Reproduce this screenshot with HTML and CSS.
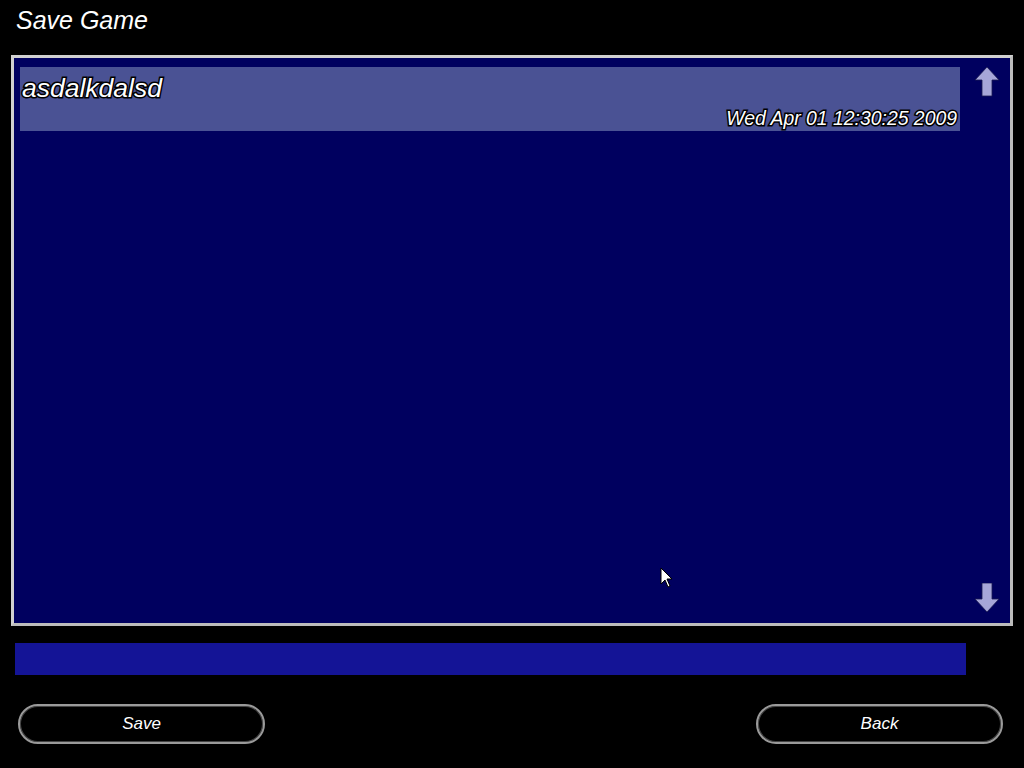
FILE: index.html
```html
<!DOCTYPE html>
<html lang="en">
<head>
    <meta charset="UTF-8">
    <title>Save Game</title>
    <link rel="stylesheet" href="styles.css">
</head>
<body>
    <div class="screen">
        <h1 class="title">Save Game</h1>

        <div class="panel">
            <div class="save-list">
                <div class="save-row selected">
                    <span class="save-name">asdalkdalsd</span>
                    <span class="save-date">Wed Apr 01 12:30:25 2009</span>
                </div>
            </div>
            <div class="scroll">
                <svg class="arrow" width="24" height="30" viewBox="0 0 24 30">
                    <polygon points="12,0 24,13 17,13 17,29 7,29 7,13 0,13" />
                </svg>
                <svg class="arrow" width="24" height="30" viewBox="0 0 24 30">
                    <polygon points="12,29 24,16 17,16 17,0 7,0 7,16 0,16" />
                </svg>
            </div>
        </div>

        <div class="name-input"></div>

        <div class="buttons">
            <div class="button">Save</div>
            <div class="button">Back</div>
        </div>

        <svg class="cursor" width="14" height="22" viewBox="0 0 14 22">
            <polygon points="1,1 1,17 5,13 8,20 10,19 7,12 12,12" />
        </svg>
    </div>
</body>
</html>
```

FILE: styles.css
```css
body {
    margin: 0;
    padding: 0;
    background-color: #000;
    font-family: "Liberation Sans", Arial, sans-serif;
    color: #fff;
}

.screen {
    position: relative;
    width: 1024px;
    height: 768px;
    overflow: hidden;
}

.title {
    margin: 0;
    padding: 5px 16px 0;
    height: 55px;
    font-size: 25px;
    font-weight: normal;
    font-style: italic;
    line-height: 30px;
    box-sizing: border-box;
}

.panel {
    display: flex;
    margin: 0 11px;
    height: 571px;
    box-sizing: border-box;
    border: 3px solid #bcbcbc;
    border-top-color: #d0d0d0;
    border-left-color: #d0d0d0;
    background-color: #00005f;
}

.save-list {
    width: 946px;
    padding: 9px 0 0 6px;
    box-sizing: border-box;
}

.save-row {
    display: flex;
    flex-direction: column;
    height: 64px;
    padding: 0 3px 0 2px;
    box-sizing: border-box;
    font-style: italic;
    -webkit-text-stroke: 3px #000;
    paint-order: stroke fill;
}

.save-row.selected {
    background-color: #4a5294;
}

.save-name {
    font-size: 26.5px;
    line-height: 30px;
    margin-top: 6px;
}

.save-date {
    align-self: flex-end;
    margin-top: auto;
    margin-bottom: 2px;
    font-size: 19.4px;
    line-height: 22px;
}

.scroll {
    flex: 1;
    display: flex;
    flex-direction: column;
    justify-content: space-between;
    align-items: center;
    padding: 9px 0 10px 4px;
}

.arrow polygon {
    fill: #a6a6d8;
    stroke: #1a1a50;
    stroke-width: 0.8;
}

.name-input {
    margin: 17px 0 0 15px;
    width: 951px;
    height: 32px;
    background-color: #141496;
}

.buttons {
    display: flex;
    justify-content: space-between;
    margin-top: 29px;
    padding: 0 21px 0 18px;
}

.button {
    width: 247px;
    height: 40px;
    box-sizing: border-box;
    border: 2px solid #9a9a9a;
    border-radius: 20px;
    box-shadow: inset 0 0 0 1px #444;
    text-align: center;
    font-size: 17px;
    font-style: italic;
    line-height: 36px;
}

.cursor {
    position: absolute;
    left: 660px;
    top: 567px;
}

.cursor polygon {
    fill: #fff;
    stroke: #000;
    stroke-width: 1;
}
```
